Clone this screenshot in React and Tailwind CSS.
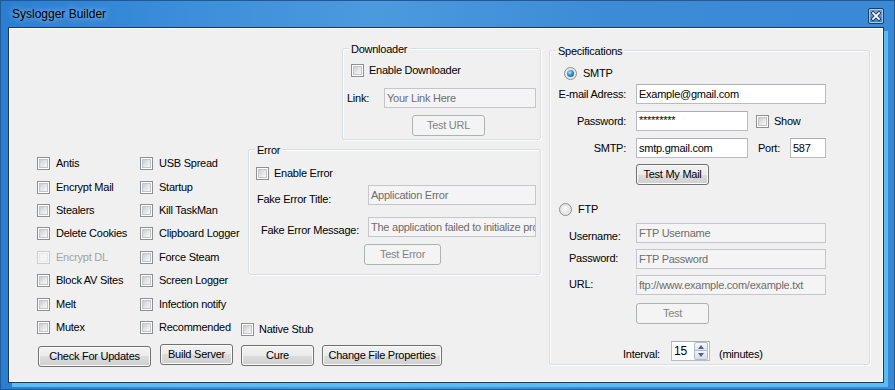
import React from 'react';
import clsx from 'clsx';

// Win7 style controls
function Check({ disabled }) {
  return (
    <span
      className={clsx(
        'box-border flex h-[13px] w-[13px] shrink-0 items-center justify-center border',
        disabled ? 'border-[#cdcdcd] bg-[#f7f7f7]' : 'border-[#8e8f8f] bg-white'
      )}
    >
      <span
        className={clsx(
          'box-border h-[9px] w-[9px] border',
          disabled
            ? 'border-[#e8e8e8] bg-[#f4f4f4]'
            : 'border-[#c2c5c9] bg-[linear-gradient(135deg,#cbcdd0_0%,#e6e7e8_55%,#f8f8f8_100%)]'
        )}
      />
    </span>
  );
}

function CheckItem({ label, disabled, className }) {
  return (
    <div className={clsx('flex items-center', className)}>
      <Check disabled={disabled} />
      <span className={clsx('ml-[6px] whitespace-nowrap leading-[13px]', disabled && 'text-[#a3a3a3]')}>{label}</span>
    </div>
  );
}

function Radio({ checked }) {
  return (
    <span className="box-border flex h-[13px] w-[13px] shrink-0 items-center justify-center rounded-full border border-[#8e8f8f] bg-[radial-gradient(circle_at_50%_50%,#f4f4f4_0%,#dedede_100%)]">
      {checked ? (
        <span className="h-[7px] w-[7px] rounded-full bg-[radial-gradient(circle_at_40%_35%,#b4ecff_0%,#2a8fd6_45%,#0b4f8f_100%)]" />
      ) : (
        <span className="h-[7px] w-[7px] rounded-full bg-[radial-gradient(circle_at_40%_35%,#ffffff_0%,#dcdcdc_100%)]" />
      )}
    </span>
  );
}

function TextBox({ value, disabled, className }) {
  return (
    <div
      className={clsx(
        'box-border flex h-[20px] shrink-0 items-center overflow-hidden whitespace-nowrap border px-[2px] leading-[13px]',
        disabled
          ? 'border-[#c3c6ca] bg-[#f4f4f4] text-[#6d6d6d]'
          : 'border-[#b8bbc1] border-t-[#abadb3] bg-white text-black',
        className
      )}
    >
      {value}
    </div>
  );
}

function Btn({ children, disabled, className }) {
  return (
    <div
      className={clsx(
        'box-border flex h-[21px] shrink-0 items-center justify-center whitespace-nowrap rounded-[3px] border leading-[13px]',
        disabled
          ? 'border-[#adb2b5] bg-[#f4f4f4] text-[#838383]'
          : 'border-[#707070] bg-[linear-gradient(#f2f2f2_0%,#ebebeb_50%,#dddddd_50%,#cfcfcf_100%)] text-black shadow-[inset_0_0_0_1px_#fbfbfb]',
        className
      )}
    >
      {children}
    </div>
  );
}

function Group({ title, className, children }) {
  return (
    <div
      className={clsx(
        'relative box-border shrink-0 rounded-[3px] border border-[#d5dfe5] shadow-[inset_1px_1px_0_#ffffff,1px_1px_0_#ffffff]',
        className
      )}
    >
      <span className="absolute left-[6px] top-[-6px] bg-[#f0f0f0] px-[2px] leading-[13px]">{title}</span>
      {children}
    </div>
  );
}

const COL1 = [
  { label: 'Antis' },
  { label: 'Encrypt Mail' },
  { label: 'Stealers' },
  { label: 'Delete Cookies' },
  { label: 'Encrypt DL', disabled: true },
  { label: 'Block AV Sites' },
  { label: 'Melt' },
  { label: 'Mutex' },
];

const COL2 = [
  'USB Spread',
  'Startup',
  'Kill TaskMan',
  'Clipboard Logger',
  'Force Steam',
  'Screen Logger',
  'Infection notify',
  'Recommended',
];

export default function App() {
  return (
    <div className="relative h-[390px] w-[895px] overflow-hidden bg-[linear-gradient(90deg,#2a7ed2_0%,#3d8fdb_22%,#4c9ade_42%,#3b8bd7_68%,#3a89d6_100%)] font-['Liberation_Sans',Arial,sans-serif] text-[11px] tracking-[-0.25px] text-black shadow-[inset_0_0_0_1px_#1f5a96]">
      {/* title bar */}
      <div className="flex h-[27px] items-start justify-between pl-[12px] pr-[11px]">
        <span className="mt-[7px] text-[12px] leading-[15px] tracking-normal [text-shadow:0_0_6px_rgba(255,255,255,0.7)]">
          Syslogger Builder
        </span>
        <div className="mt-[8px] box-border h-[16px] w-[16px] rounded-[2px] border border-[#1f3e63] bg-[linear-gradient(#6da6dd,#3d7fc2)] shadow-[inset_0_0_0_1px_#a9c9ea]">
          <svg width="14" height="14" viewBox="0 0 14 14">
            <path d="M4 4 L10 10 M10 4 L4 10" stroke="#1b3454" strokeWidth="3.4" strokeLinecap="square" />
            <path d="M4 4 L10 10 M10 4 L4 10" stroke="#ffffff" strokeWidth="1.8" strokeLinecap="square" />
          </svg>
        </div>
      </div>

      {/* client area */}
      <div className="ml-[8px] box-border h-[356px] w-[876px] border border-[#1e3a5a] bg-[#f0f0f0] p-px shadow-[inset_0_0_0_1px_#ffffff,4px_4px_0_#58bdf0]">
        <div className="flex">
          {/* left part */}
          <div className="flex w-[531px] shrink-0 flex-col">
            {/* downloader */}
            <Group title="Downloader" className="ml-[332px] mt-[19px] h-[92px] w-[199px]">
              <CheckItem label="Enable Downloader" className="ml-[8px] mt-[15px] [&>span:last-child]:ml-[5px]" />
              <div className="mt-[11px] flex items-center">
                <span className="ml-[4px] w-[37px] leading-[13px]">Link:</span>
                <TextBox value="Your Link Here" disabled className="w-[152px]" />
              </div>
              <Btn disabled className="ml-[69px] mt-[7px] w-[73px]">Test URL</Btn>
            </Group>

            {/* checkboxes + error */}
            <div className="mt-[9px] flex">
              <div className="flex w-[130px] shrink-0 flex-col pl-[27px] pt-[3px]">
                {COL1.map((c) => (
                  <div key={c.label} className="flex h-[23.4px] items-center">
                    <CheckItem label={c.label} disabled={c.disabled} />
                  </div>
                ))}
              </div>
              <div className="flex w-[101px] shrink-0 flex-col pt-[3px]">
                {COL2.map((l) => (
                  <div key={l} className="flex h-[23.4px] items-center">
                    <CheckItem label={l} />
                  </div>
                ))}
              </div>
              <div className="flex flex-col">
                <Group title="Error" className="ml-[7px] h-[126px] w-[293px]">
                  <CheckItem label="Enable Error" className="ml-[7px] mt-[17px] [&>span:last-child]:ml-[5px]" />
                  <div className="mt-[5px] flex items-start">
                    <span className="ml-[8px] mt-[8px] w-[111px] shrink-0 leading-[13px]">Fake Error Title:</span>
                    <TextBox value="Application Error" disabled className="w-[168px]" />
                  </div>
                  <div className="mt-[11px] flex items-start">
                    <span className="ml-[12px] mt-[7px] w-[107px] shrink-0 leading-[13px]">Fake Error Message:</span>
                    <TextBox value="The application failed to initialize properly" disabled className="w-[168px]" />
                  </div>
                  <Btn disabled className="ml-[115px] mt-[7px] w-[77px]">Test Error</Btn>
                </Group>
                <CheckItem label="Native Stub" className="mt-[48px] [&>span:last-child]:ml-[5px]" />
              </div>
            </div>

            {/* bottom buttons */}
            <div className="mt-[5px] flex items-start pl-[28px]">
              <Btn className="mt-[2px] w-[113px]">Check For Updates</Btn>
              <Btn className="ml-[9px] w-[73px]">Build Server</Btn>
              <Btn className="ml-[8px] mt-[1px] w-[73px]">Cure</Btn>
              <Btn className="ml-[8px] mt-[1px] w-[120px]">Change File Properties</Btn>
            </div>
          </div>

          {/* specifications */}
          <Group title="Specifications" className="ml-[8px] mt-[21px] h-[315px] w-[321px]">
            <div className="ml-[14px] mt-[16px] flex items-center">
              <Radio checked />
              <span className="ml-[6px] leading-[13px]">SMTP</span>
            </div>
            <div className="mt-[4px] flex items-center">
              <span className="w-[76px] shrink-0 text-right leading-[13px]">E-mail Adress:</span>
              <TextBox value="Example@gmail.com" className="ml-[10px] w-[190px]" />
            </div>
            <div className="mt-[7px] flex items-center">
              <span className="w-[76px] shrink-0 text-right leading-[13px]">Password:</span>
              <TextBox value="*********" className="ml-[10px] w-[112px] items-start pt-[2px]" />
              <CheckItem label="Show" className="ml-[8px] [&>span:last-child]:ml-[5px]" />
            </div>
            <div className="mt-[7px] flex items-center">
              <span className="w-[76px] shrink-0 text-right leading-[13px]">SMTP:</span>
              <TextBox value="smtp.gmail.com" className="ml-[10px] w-[112px]" />
              <span className="ml-[10px] w-[32px] shrink-0 leading-[13px]">Port:</span>
              <TextBox value="587" className="w-[36px]" />
            </div>
            <Btn className="ml-[86px] mt-[6px] w-[73px]">Test My Mail</Btn>

            <div className="ml-[9px] mt-[18px] flex items-center">
              <Radio />
              <span className="ml-[6px] leading-[13px]">FTP</span>
            </div>
            <div className="mt-[7px] flex items-start">
              <span className="ml-[19px] mt-[7px] w-[67px] shrink-0 leading-[13px]">Username:</span>
              <TextBox value="FTP Username" disabled className="w-[190px]" />
            </div>
            <div className="mt-[6px] flex items-start">
              <span className="ml-[19px] mt-[3px] w-[67px] shrink-0 leading-[13px]">Password:</span>
              <TextBox value="FTP Password" disabled className="w-[190px]" />
            </div>
            <div className="mt-[6px] flex items-start">
              <span className="ml-[19px] mt-[3px] w-[67px] shrink-0 leading-[13px]">URL:</span>
              <TextBox value="ftp://www.example.com/example.txt" disabled className="w-[190px]" />
            </div>
            <Btn disabled className="ml-[86px] mt-[8px] w-[73px]">Test</Btn>

            <div className="mt-[17px] flex items-start">
              <span className="ml-[73px] mt-[7px] w-[48px] shrink-0 leading-[13px]">Interval:</span>
              <div className="box-border flex h-[20px] w-[39px] shrink-0 items-center border border-[#b8bbc1] border-t-[#abadb3] bg-white">
                <span className="flex-1 pl-[2px] text-[12px] leading-[13px]">15</span>
                <div className="mr-px flex h-[18px] w-[14px] flex-col">
                  <div className="box-border flex h-[9px] items-center justify-center rounded-t-[2px] border border-[#b2bac4] bg-[linear-gradient(#f6f8fa,#dfe5ec)]">
                    <svg width="6" height="4" viewBox="0 0 6 4">
                      <path d="M0 4 L3 0 L6 4 Z" fill="#4f6480" />
                    </svg>
                  </div>
                  <div className="box-border flex h-[9px] items-center justify-center rounded-b-[2px] border border-t-0 border-[#b2bac4] bg-[linear-gradient(#f0f3f6,#d6dde6)]">
                    <svg width="6" height="4" viewBox="0 0 6 4">
                      <path d="M0 0 L6 0 L3 4 Z" fill="#4f6480" />
                    </svg>
                  </div>
                </div>
              </div>
              <span className="ml-[9px] mt-[7px] leading-[13px]">(minutes)</span>
            </div>
          </Group>
        </div>
      </div>
    </div>
  );
}
